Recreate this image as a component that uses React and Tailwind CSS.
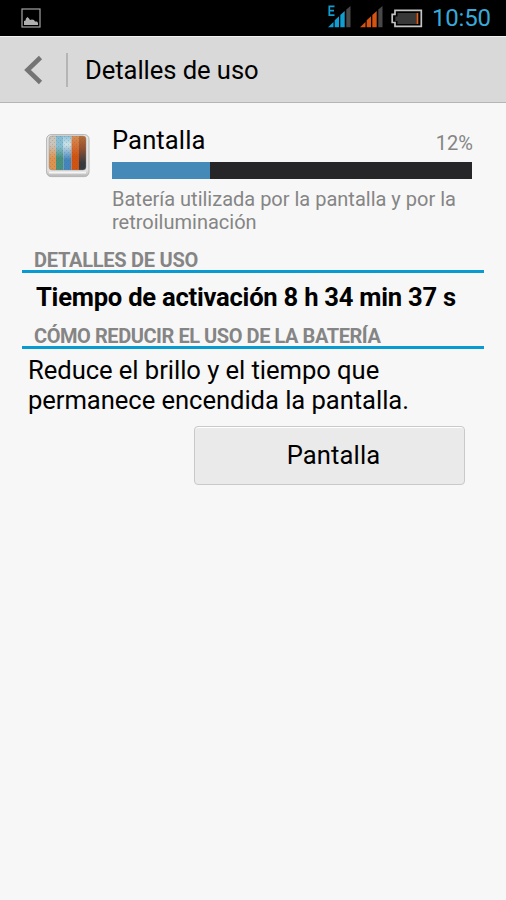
function ImageIcon() {
  return (
    <svg width="20" height="20" viewBox="0 0 20 20" className="shrink-0">
      <rect x="1" y="1" width="18" height="18" fill="none" stroke="#a4a4a4" strokeWidth="1.2" />
      <path d="M3 17v-4l1.500-.5.5-2 1.500-1.500 1.500 1.500 1 1.500 2-.5 2 .5 1 1.500h2l1 1.500v2z" fill="#b0b0b0" />
    </svg>
  );
}

function Signal({ color, label }) {
  return (
    <svg width="24" height="24" viewBox="0 0 24 24" className="shrink-0">
      <path d="M1 22.300l5.500-5.300v5.300z" fill={color} />
      <path d="M7.700 22.300v-7l4.300-4v11z" fill={color} />
      <path d="M13.300 22.300V10l4.400-4v16.300z" fill={color} />
      <path d="M19.300 22.300V4.500L23.500 1v21.300z" fill="#484848" />
      {label && <path d="M7.500 1.300H2.300v8.900h5.200M2.300 5.700h4.700" fill="none" stroke={color} strokeWidth="1.700" />}
    </svg>
  );
}

function Battery() {
  return (
    <svg width="34" height="20" viewBox="0 0 34 20" className="shrink-0">
      <path d="M5 2.300h26.300v16H5V14.500H2.200V6.300H5z" fill="#000" stroke="#c4c4c4" strokeWidth="1.700" />
      <path d="M7.500 5H27v11H7.500v-3H5.300V8.500h2.200z" fill="#383838" />
      <path d="M26.700 5h1.600v11h-1.600z" fill="#e65a12" />
    </svg>
  );
}

function DisplayIcon() {
  return (
    <svg width="44" height="44" viewBox="0 0 44 44" className="shrink-0">
      <defs>
        <linearGradient id="frame" x1="0" y1="0" x2="0" y2="1">
          <stop offset="0" stopColor="#e5e5e5" />
          <stop offset=".85" stopColor="#e2e2e2" />
          <stop offset="1" stopColor="#b5b5b5" />
        </linearGradient>
        <linearGradient id="s1" x1="0" y1="0" x2="0" y2="1">
          <stop offset=".25" stopColor="#c9c4bc" />
          <stop offset=".65" stopColor="#dc9350" />
        </linearGradient>
        <linearGradient id="s2" x1="0" y1="0" x2="0" y2="1">
          <stop offset=".3" stopColor="#84bed4" />
          <stop offset=".65" stopColor="#47917f" />
        </linearGradient>
        <linearGradient id="s3" x1="0" y1="0" x2="0" y2="1">
          <stop offset="0" stopColor="#8cc5dc" />
          <stop offset=".25" stopColor="#cce1e8" />
          <stop offset=".7" stopColor="#4385bd" />
        </linearGradient>
        <linearGradient id="s4" x1="0" y1="0" x2="0" y2="1">
          <stop offset="0" stopColor="#d78e58" />
          <stop offset=".6" stopColor="#d15312" />
        </linearGradient>
        <linearGradient id="s5" x1="0" y1="0" x2="0" y2="1">
          <stop offset="0" stopColor="#b86f39" />
          <stop offset=".35" stopColor="#965033" />
          <stop offset=".8" stopColor="#343a40" />
        </linearGradient>
        <pattern id="grain" width="4" height="4" patternUnits="userSpaceOnUse">
          <path d="M0 0h1v1H0zM2 2h1v1H2z" fill="#684a38" />
        </pattern>
        <clipPath id="screen"><rect x="3" y="2" width="37" height="34" rx="3" /></clipPath>
      </defs>
      <rect x=".6" y=".6" width="42.400" height="42" rx="4.500" fill="url(#frame)" stroke="#b4b4b4" />
      <path d="M3 38.500h37" stroke="#f4f4f4" strokeWidth="2" />
      <g clipPath="url(#screen)">
        <path d="M3 2h7v34H3z" fill="url(#s1)" />
        <path d="M10 2h7.500v34H10z" fill="url(#s2)" />
        <path d="M17.500 2h8v34h-8z" fill="url(#s3)" />
        <path d="M25.500 2h7.500v34h-7.500z" fill="url(#s4)" />
        <path d="M33 2h7v34h-7z" fill="url(#s5)" />
        <path d="M3 2h37v34H3z" fill="url(#grain)" opacity=".2" />
      </g>
      <rect x="3" y="2" width="37" height="34" rx="3" fill="none" stroke="#888" strokeOpacity=".4" />
    </svg>
  );
}

function SectionTitle({ children, className }) {
  return (
    <h2 className={`ml-[22px] h-[26px] w-[462px] border-b-[3px] border-[#079bd1] pl-3 text-[20px] font-bold leading-[27px] text-[#858585] ${className}`}>
      {children}
    </h2>
  );
}

export default function App() {
  return (
    <div className="flex h-[900px] w-[506px] flex-col overflow-hidden whitespace-nowrap bg-[#f7f7f7] font-['Roboto','Liberation_Sans',sans-serif] text-black">
      <div className="flex h-9 shrink-0 items-start bg-black pl-[21px] pt-[5px]">
        <div className="pt-[3px]"><ImageIcon /></div>
        <div className="ml-[286px]"><Signal color="#119ed2" label /></div>
        <div className="ml-2"><Signal color="#d65312" /></div>
        <div className="ml-[7px] pt-[3px]"><Battery /></div>
        <span className="ml-2 text-[24px] leading-[27px] tracking-[-0.2px] text-[#38a9d9]">10:50</span>
      </div>
      <header className="flex h-[67px] shrink-0 items-center border-b border-t border-b-[#b5b5b5] border-t-[#f2f2f2] bg-[#d9d9d9]">
        <svg width="20" height="30" viewBox="0 0 20 30" className="ml-6">
          <path d="M16.500 2.500L3.500 15l13 12.500" fill="none" stroke="#747474" strokeWidth="4.600" />
        </svg>
        <div className="ml-[22px] h-[34px] w-[2px] bg-[#b5b5b5]" />
        <h1 className="ml-[17px] text-[25.600px] leading-[30px] tracking-[-0.06px]">Detalles de uso</h1>
      </header>
      <section className="flex h-[144px] shrink-0 pl-[46px] pt-[22px]">
        <div className="mt-[9px]"><DisplayIcon /></div>
        <div className="ml-[22px] w-[360px]">
          <div className="flex h-[37px] justify-between">
            <span className="text-[25.600px] leading-[30px] tracking-[0.1px]">Pantalla</span>
            <span className="-mr-px pt-[6px] text-[20px] leading-[24px] text-[#858585]">12%</span>
          </div>
          <div className="h-[17px] bg-[#262629]">
            <div className="h-full w-[98px] bg-[#4589b9]" />
          </div>
          <p className="mt-[9px] text-[20px] leading-[23px] text-[#858585]">
            Batería utilizada por la pantalla y por la<br />retroiluminación
          </p>
        </div>
      </section>
      <SectionTitle className="tracking-[-0.26px]">DETALLES DE USO</SectionTitle>
      <p className="ml-[36px] mt-[9px] h-[30px] text-[25.600px] font-bold leading-[30px] tracking-[-0.24px]">
        Tiempo de activación 8 h 34 min 37 s
      </p>
      <SectionTitle className="mt-[11px] tracking-[-0.44px]">CÓMO REDUCIR EL USO DE LA BATERÍA</SectionTitle>
      <p className="ml-7 mt-[6px] text-[25.600px] leading-[30px] tracking-[-0.05px]">
        Reduce el brillo y el tiempo que<br />permanece encendida la pantalla.
      </p>
      <button className="ml-[194px] mt-[11px] h-[59px] w-[271px] shrink-0 rounded-[4px] border border-[#c9c9c9] bg-[#eaeaea] pb-[2px] pl-[8px] text-center text-[25.600px] leading-[30px] tracking-[0.1px] shadow-[inset_0_1px_0_#ffffff]">
        Pantalla
      </button>
    </div>
  );
}
